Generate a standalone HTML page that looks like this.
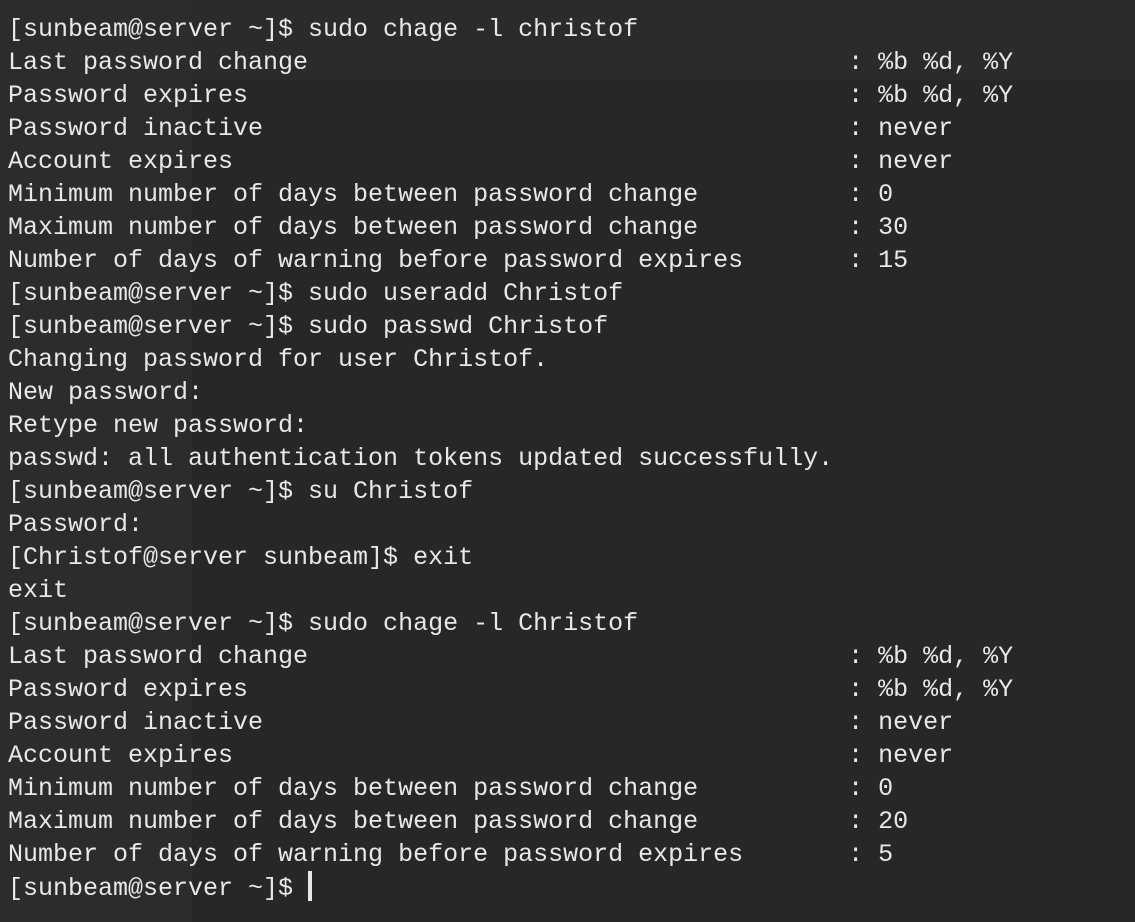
<!DOCTYPE html>
<html><head><meta charset="utf-8"><style>
html,body{margin:0;padding:0;}
body{width:1135px;height:922px;overflow:hidden;background:#272725;position:relative;}
.l{position:absolute;left:0;top:0;width:192px;height:922px;background:#2c2c2a;}
.t{position:absolute;left:0;top:0;width:1135px;height:80px;background:#2b2b29;}
pre{position:absolute;left:8px;top:13px;margin:0;font-family:"Liberation Mono",monospace;font-size:25px;line-height:33px;color:#e8e8e8;}
.c{display:inline-block;width:4px;height:30px;background:#e8e8e8;vertical-align:-6px;}
</style></head><body>
<div class="t"></div><div class="l"></div>
<pre>[sunbeam@server ~]$ sudo chage -l christof
Last password change                                    : %b %d, %Y
Password expires                                        : %b %d, %Y
Password inactive                                       : never
Account expires                                         : never
Minimum number of days between password change          : 0
Maximum number of days between password change          : 30
Number of days of warning before password expires       : 15
[sunbeam@server ~]$ sudo useradd Christof
[sunbeam@server ~]$ sudo passwd Christof
Changing password for user Christof.
New password:
Retype new password:
passwd: all authentication tokens updated successfully.
[sunbeam@server ~]$ su Christof
Password:
[Christof@server sunbeam]$ exit
exit
[sunbeam@server ~]$ sudo chage -l Christof
Last password change                                    : %b %d, %Y
Password expires                                        : %b %d, %Y
Password inactive                                       : never
Account expires                                         : never
Minimum number of days between password change          : 0
Maximum number of days between password change          : 20
Number of days of warning before password expires       : 5
[sunbeam@server ~]$ <span class="c"></span></pre>
</body></html>
